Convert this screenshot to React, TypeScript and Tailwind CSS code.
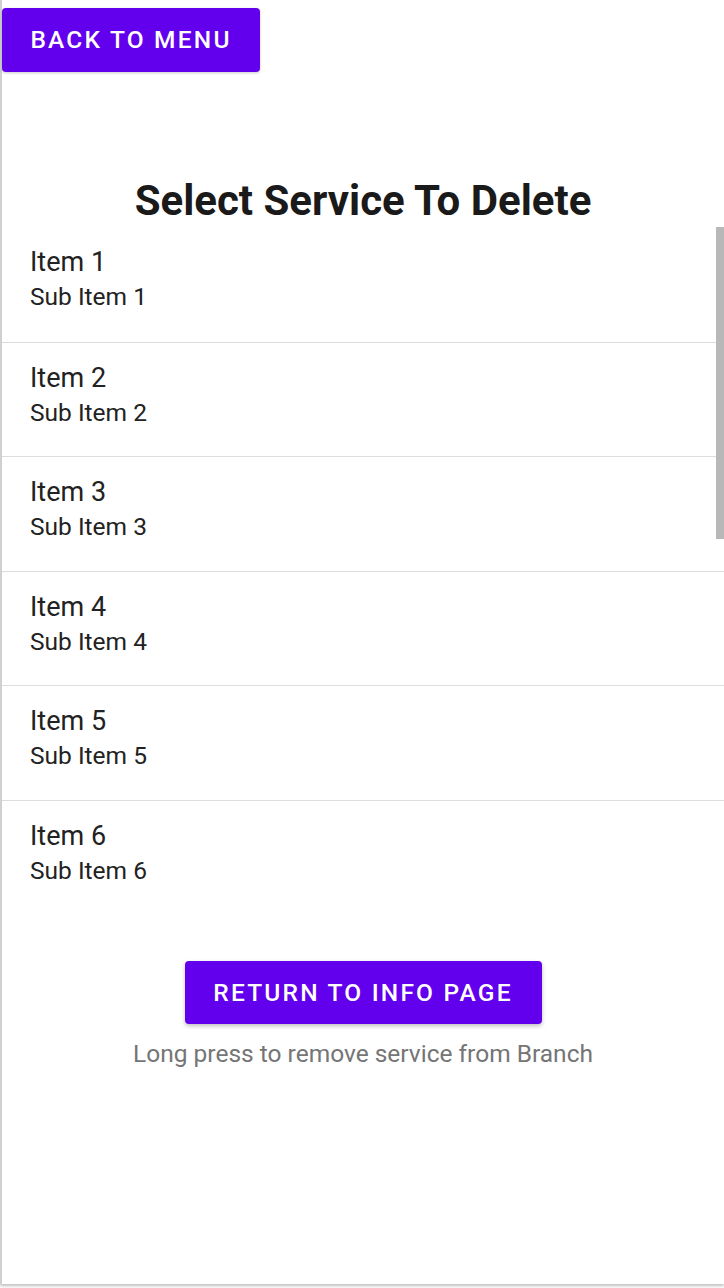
import React from "react";

const items = [1, 2, 3, 4, 5, 6];

export default function App() {
  return (
    <div
      className="relative w-[724px] h-[1288px] bg-white overflow-hidden"
      style={{ fontFamily: "Roboto, 'Noto Sans', sans-serif" }}
    >
      <div className="h-[1284px] border-l-[2px] border-[#d0d0d0] shadow-[0_2px_3px_rgba(0,0,0,0.25)] bg-white flex flex-col">
        <div className="pt-[8px]">
          <button className="h-[64px] w-[258px] rounded-[4px] bg-[#6200ee] text-white text-[24.5px] leading-[30px] font-medium tracking-[0.09em] shadow-[0_1px_3px_rgba(0,0,0,0.2)]">
            BACK TO MENU
          </button>
        </div>
        <h1 className="mt-[107px] text-center text-[42px] leading-[44px] font-bold text-[#1a1a1a] whitespace-nowrap">
          Select Service To Delete
        </h1>
        <div className="relative mt-[4px] h-[685px]">
          <div className="flex flex-col">
            {items.map((n, i) => (
              <div
                key={n}
                className={`h-[114.5px] pl-[28px] pt-[18px] ${i > 0 ? "border-t border-[#dddddd]" : ""}`}
              >
                <div className="text-[27px] leading-[34px] text-[#222222] whitespace-nowrap">Item {n}</div>
                <div className="text-[24.5px] leading-[36px] text-[#222222] whitespace-nowrap">Sub Item {n}</div>
              </div>
            ))}
          </div>
          <div className="absolute right-0 top-0 w-[8px] h-[312px] bg-[#b8b8b8]" />
        </div>
        <div className="mt-[49px] flex justify-center">
          <button className="h-[63px] w-[357px] rounded-[4px] bg-[#6200ee] text-white text-[24.5px] leading-[30px] font-medium tracking-[0.09em] shadow-[0_2px_4px_rgba(0,0,0,0.25)] whitespace-nowrap">
            RETURN TO INFO PAGE
          </button>
        </div>
        <p className="mt-[14px] text-center text-[24.5px] leading-[32px] text-[#757575] whitespace-nowrap">
          Long press to remove service from Branch
        </p>
      </div>
    </div>
  );
}
